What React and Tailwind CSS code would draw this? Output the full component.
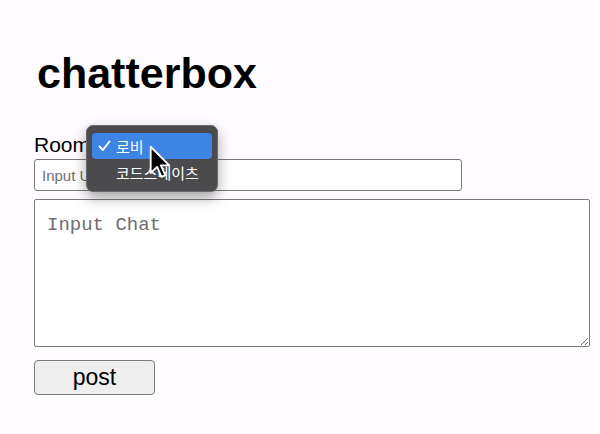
import React from 'react';

// --- room options shown in the open select popup ---
const ROOMS = [
  { id: 'lobby', label: '로비', selected: true },
  { id: 'cs', label: '코드스테이츠', selected: false },
];

function Cursor() {
  return (
    <svg className="absolute left-[149px] top-[145px]" width="22" height="34" viewBox="0 0 13 20">
      <path d="M1 1 L1 16.5 L4.8 12.9 L7.4 18.8 L9.6 17.8 L7 12 L12 12 Z" fill="#000" stroke="#fff" strokeWidth="1.1" strokeLinejoin="round" />
    </svg>
  );
}

function Check() {
  return (
    <svg width="13" height="12" viewBox="0 0 13 12">
      <path d="M1.5 6.5 L4.8 10 L11.5 1.5" fill="none" stroke="#fff" strokeWidth="2" strokeLinecap="round" strokeLinejoin="round" />
    </svg>
  );
}

function RoomPopup() {
  return (
    <div className="absolute left-[86px] top-[125px] w-[132px] bg-[#4b4a4d] border border-[#6b6a6d] rounded-[7px] pt-[7px] pb-[6px] px-[5px] shadow-[0_6px_14px_rgba(0,0,0,0.35)] font-['Noto_Sans_CJK_KR',sans-serif] text-[15px] text-white">
      {ROOMS.map(r => (
        <div key={r.id} className={`h-[26px] flex items-center rounded-[4px] ${r.selected ? 'bg-[#3d84e4]' : ''}`}>
          <span className="w-[24px] pl-[6px] flex items-center">{r.selected ? <Check /> : null}</span>
          <span className="leading-none">{r.label}</span>
        </div>
      ))}
    </div>
  );
}

export default function App() {
  return (
    <div className="relative min-h-screen bg-[#fefcfe] pl-[34px] pt-[49px] font-['Liberation_Sans',Arial,sans-serif] text-black">
      <h1 className="text-[43px] font-bold leading-[48px] ml-[3px]">chatterbox</h1>
      <div className="mt-[36px] text-[21px] leading-[24px]">Room</div>
      <input
        type="text"
        placeholder="Input Username"
        className="mt-[2px] block w-[428px] h-[32px] border border-[#7a7a7a] rounded-[3px] bg-white px-[7px] text-[15px] placeholder:text-[#6e6e6e] outline-none"
      />
      <textarea
        placeholder="Input Chat"
        className="mt-[8px] block w-[556px] h-[148px] border border-[#7a7a7a] rounded-[2px] bg-white px-[12px] pt-[13px] pb-[8px] font-['Liberation_Mono',monospace] text-[19px] leading-[24px] placeholder:text-[#6e6e6e] outline-none"
      />
      <button className="mt-[13px] block w-[121px] h-[35px] bg-[#efeeef] border border-[#7a7a7a] rounded-[4px] text-[23px] leading-none">post</button>
      <RoomPopup />
      <Cursor />
    </div>
  );
}
